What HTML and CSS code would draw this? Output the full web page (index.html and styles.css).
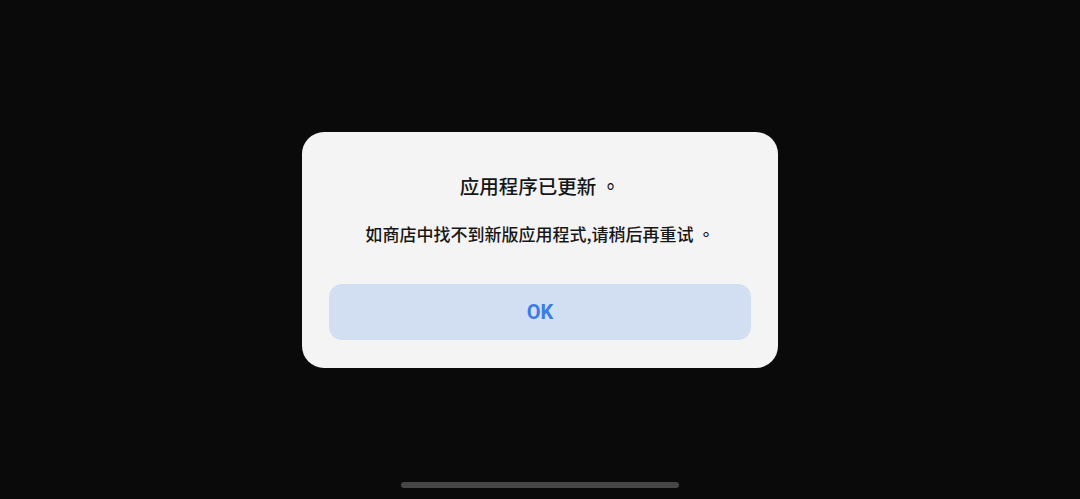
FILE: index.html
```html
<!DOCTYPE html>
<html>
    <head>
        <title>应用程序已更新</title>
        <link rel="stylesheet" href="styles.css">
    </head>
    <body>
        <div class="Screen">
            <div class="Dialog">
                <h2 class="DialogTitle">应用程序已更新 。</h2>
                <p class="DialogText">如商店中找不到新版应用程式,请稍后再重试 。</p>
                <button class="DialogButton">OK</button>
            </div>
            <div class="HomeBar"></div>
        </div>
    </body>
</html>
```

FILE: styles.css
```css
html, body {
    margin: 0;
    padding: 0;
    background-color: #0a0a0a;
}
.Screen {
    position: relative;
    height: 499px;
    display: flex;
    align-items: center;
    justify-content: center;
    font-family: "Noto Sans CJK TC", "Noto Sans CJK SC", sans-serif;
}
.Dialog {
    width: 476px;
    box-sizing: border-box;
    padding: 40px 27px 28px;
    background-color: #f4f4f4;
    border-radius: 22px;
    display: flex;
    flex-direction: column;
    align-items: stretch;
    text-align: center;
}
.DialogTitle {
    margin: 0;
    font-size: 19.5px;
    line-height: 28px;
    font-weight: 500;
    color: #161616;
}
.DialogText {
    margin: 22px 0 0;
    font-size: 17px;
    line-height: 24px;
    font-weight: 500;
    color: #161616;
}
.DialogButton {
    margin-top: 38px;
    height: 56px;
    border: none;
    border-radius: 13px;
    background-color: #d2dff3;
    color: #3a7be5;
    font-family: Roboto, "Noto Sans", sans-serif;
    font-size: 20px;
    font-weight: 700;
}
/* system gesture bar lies over the screen */
.HomeBar {
    position: absolute;
    bottom: 11px;
    left: 401px;
    width: 278px;
    height: 6px;
    border-radius: 3px;
    background-color: #464646;
}
```
